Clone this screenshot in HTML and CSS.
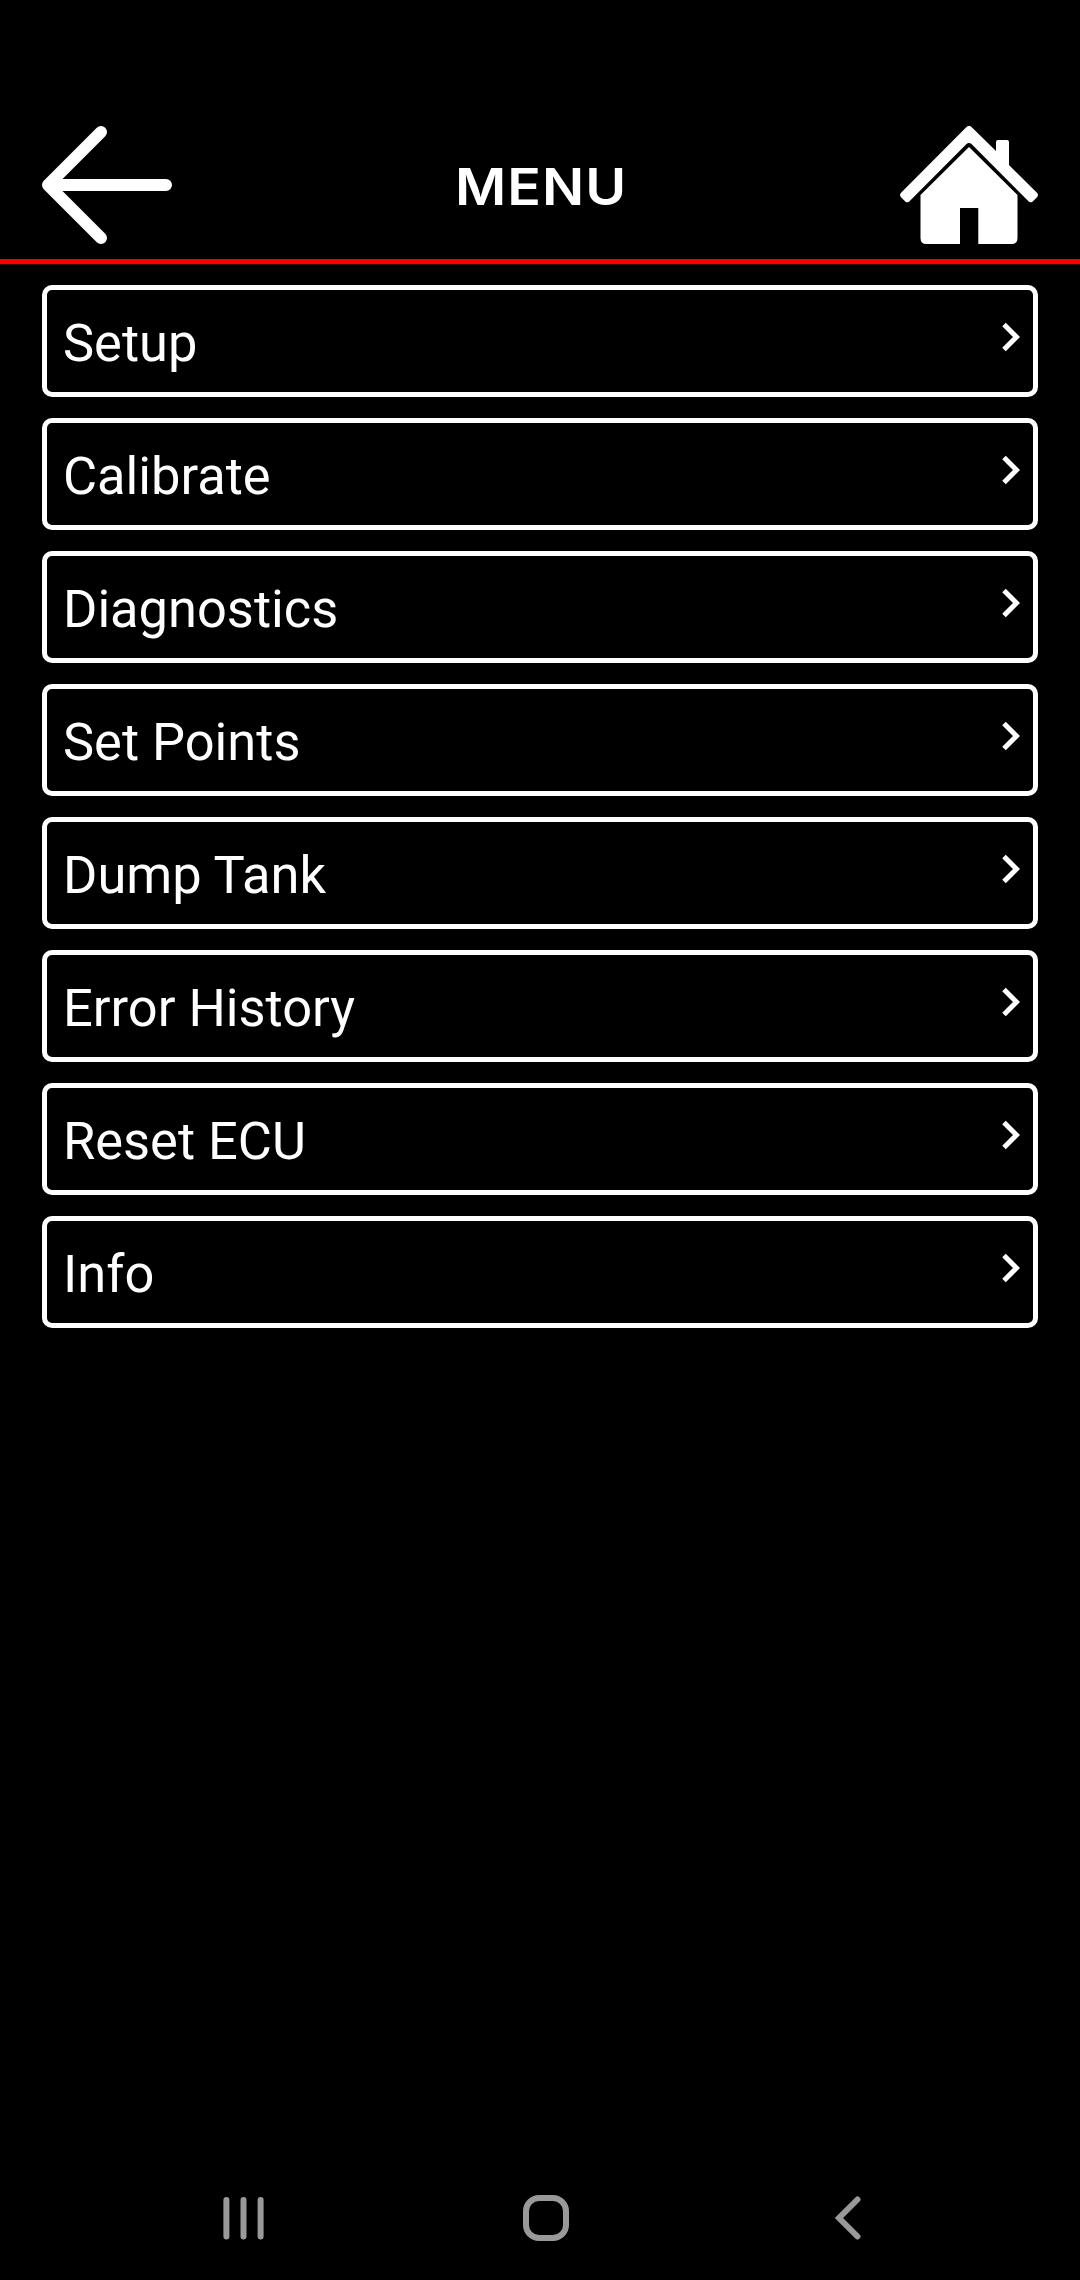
FILE: index.html
```html
<!DOCTYPE html>
<html lang="en">
<head>
  <meta charset="UTF-8">
  <title>Menu</title>
  <meta name="viewport" content="width=device-width, initial-scale=1.0">
  <link rel="stylesheet" href="styles.css">
</head>
<body>

<!-- HEADER -->
<header>
  <a href="#" class="back-btn" aria-label="Back">
    <svg width="130" height="118" viewBox="0 0 130 118">
      <path d="M59 6 L6 59 L59 112 M6 59 H124"/>
    </svg>
  </a>
  <h1>MENU</h1>
  <a href="#" class="home-btn" aria-label="Home">
    <svg width="138" height="118" viewBox="0 0 138 118">
      <path d="M66.5 .9 Q69 -1 71.5 .9 L96 25 V16 Q96 14 98 14 H107 Q109 14 109 16 V39 L137.2 67 Q138.7 69 137.2 71 L132.5 75.7 Q131 77 129 75.7 L71.5 18 Q69 15.8 66.5 18 L9 75.7 Q7 77 5.5 75.7 L.8 71 Q-.7 69 .8 67 Z"/>
      <path d="M69 21 L117.5 69 V112 Q117.5 118 111.5 118 H78.3 V82 H60 V118 H26.5 Q20.5 118 20.5 112 V69 Z"/>
    </svg>
  </a>
</header>

<!-- MENU LIST -->
<main class="menu">
  <a href="#" class="menu-item"><span>Setup</span><svg class="chevron" width="18" height="30" viewBox="0 0 18 30"><path d="M2 2.5 L14.5 15 L2 27.5"/></svg></a>
  <a href="#" class="menu-item"><span>Calibrate</span><svg class="chevron" width="18" height="30" viewBox="0 0 18 30"><path d="M2 2.5 L14.5 15 L2 27.5"/></svg></a>
  <a href="#" class="menu-item"><span>Diagnostics</span><svg class="chevron" width="18" height="30" viewBox="0 0 18 30"><path d="M2 2.5 L14.5 15 L2 27.5"/></svg></a>
  <a href="#" class="menu-item"><span>Set Points</span><svg class="chevron" width="18" height="30" viewBox="0 0 18 30"><path d="M2 2.5 L14.5 15 L2 27.5"/></svg></a>
  <a href="#" class="menu-item"><span>Dump Tank</span><svg class="chevron" width="18" height="30" viewBox="0 0 18 30"><path d="M2 2.5 L14.5 15 L2 27.5"/></svg></a>
  <a href="#" class="menu-item"><span>Error History</span><svg class="chevron" width="18" height="30" viewBox="0 0 18 30"><path d="M2 2.5 L14.5 15 L2 27.5"/></svg></a>
  <a href="#" class="menu-item"><span>Reset ECU</span><svg class="chevron" width="18" height="30" viewBox="0 0 18 30"><path d="M2 2.5 L14.5 15 L2 27.5"/></svg></a>
  <a href="#" class="menu-item"><span>Info</span><svg class="chevron" width="18" height="30" viewBox="0 0 18 30"><path d="M2 2.5 L14.5 15 L2 27.5"/></svg></a>
</main>

<!-- SYSTEM NAVIGATION -->
<nav>
  <svg width="42" height="46" viewBox="0 0 42 46">
    <path d="M3.4 5 V41.5 M20.5 5 V41.5 M37.6 5 V41.5"/>
  </svg>
  <svg width="46" height="46" viewBox="0 0 46 46">
    <rect x="3" y="3" width="40" height="40" rx="13"/>
  </svg>
  <svg class="nav-back" width="26" height="46" viewBox="0 0 26 46">
    <path d="M22.5 4.5 L4 23 L22.5 41.5"/>
  </svg>
</nav>

</body>
</html>
```

FILE: styles.css
```css
* { box-sizing: border-box; }

body {
  margin: 0;
  min-height: 2280px;
  display: flex;
  flex-direction: column;
  background: #000;
  color: #fff;
  font-family: Roboto, sans-serif;
}

a { color: inherit; text-decoration: none; }

svg { display: block; }

header {
  height: 264px;
  padding: 126px 42px 0;
  display: grid;
  grid-template-columns: 138px 1fr 138px;
  align-items: start;
  border-bottom: 5px solid #f00;
  box-shadow: 0 1px 0 #300;
}

h1 {
  margin: 0;
  padding-left: 2px;
  font-family: Inter, sans-serif;
  font-size: 51px;
  font-weight: 600;
  line-height: 122px;
  letter-spacing: 1px;
  text-align: center;
  transform: scaleX(1.09);
}

.back-btn path {
  fill: none;
  stroke: #fff;
  stroke-width: 12;
  stroke-linecap: round;
  stroke-linejoin: round;
}

.home-btn path {
  fill: #fff;
}

.menu {
  flex: 1;
  display: flex;
  flex-direction: column;
  gap: 21px;
  padding: 21px 42px;
}

.menu-item {
  height: 112px;
  padding: 0 13px 0 16px;
  display: flex;
  align-items: center;
  justify-content: space-between;
  border: 5px solid #fff;
  border-radius: 10px;
  font-size: 52.4px;
  line-height: 97px;
}

.menu-item span {
  padding-top: 5px;
}

.chevron {
  margin-bottom: 8px;
}

.chevron path {
  fill: none;
  stroke: #fff;
  stroke-width: 5;
}

nav {
  height: 124px;
  padding: 0 219px 0 223px;
  display: flex;
  align-items: center;
  justify-content: space-between;
}

nav path,
nav rect {
  fill: none;
  stroke: #999;
  stroke-width: 6;
  stroke-linecap: round;
}

.nav-back {
  margin-left: 8px;
}
```
